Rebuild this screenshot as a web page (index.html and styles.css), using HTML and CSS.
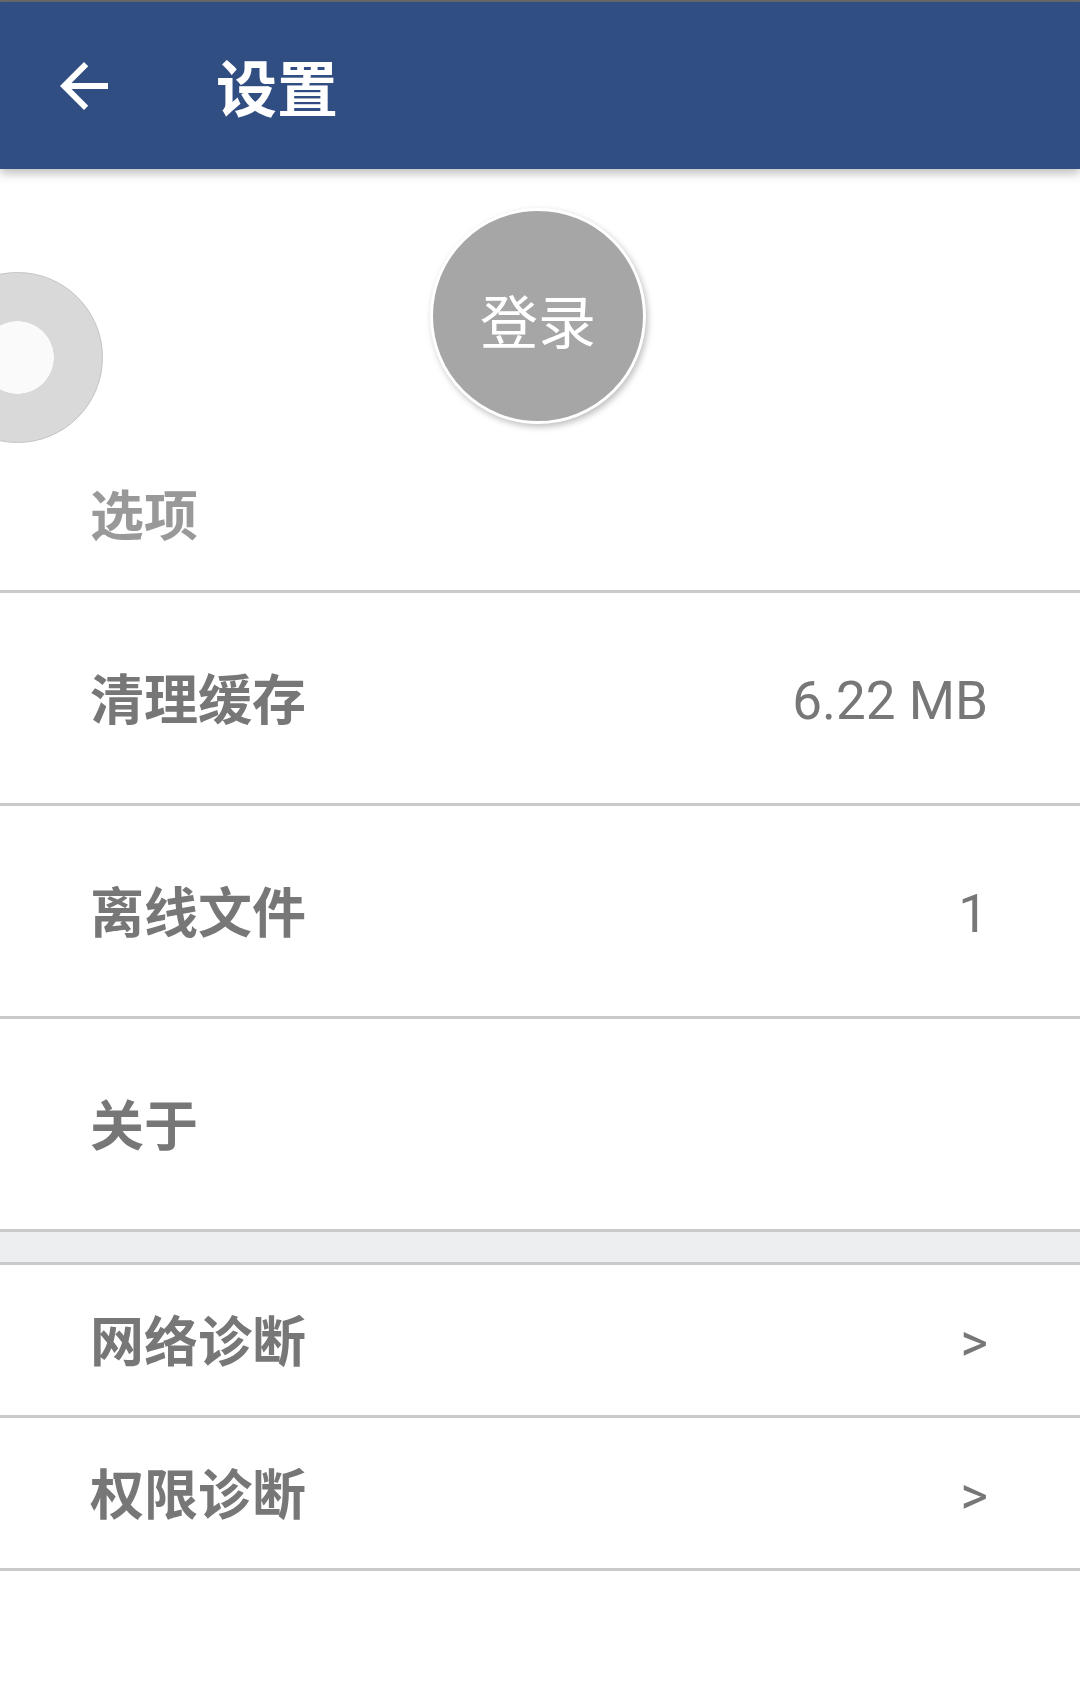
FILE: index.html
```html
<!DOCTYPE html>
<html lang="zh-CN">

<head>
  <meta charset="UTF-8">
  <meta name="viewport" content="width=device-width, initial-scale=1.0">
  <title>设置</title>
  <link rel="stylesheet" href="styles.css">
</head>

<body>
  <div class="status-line"></div>
  <header class="app-bar">
    <button class="back-btn" title="返回">
      <svg viewBox="0 0 24 24" width="72" height="72">
        <path d="M20 11H7.83l5.59-5.59L12 4l-8 8 8 8 1.41-1.41L7.83 13H20v-2z" fill="#ffffff" />
      </svg>
    </button>
    <h1 class="app-title">设置</h1>
  </header>

  <section class="profile">
    <div class="float-dot"></div>
    <div class="login-circle">登录</div>
    <h4 class="section-title">选项</h4>
  </section>

  <ul class="settings-list">
    <li class="item"><span class="label">清理缓存</span><span class="value">6.22 MB</span></li>
    <li class="item"><span class="label">离线文件</span><span class="value">1</span></li>
    <li class="item"><span class="label">关于</span></li>
    <li class="divider-band"></li>
    <li class="item short"><span class="label">网络诊断</span><span class="value">&gt;</span></li>
    <li class="item short"><span class="label">权限诊断</span><span class="value">&gt;</span></li>
  </ul>
</body>

</html>
```

FILE: styles.css
```css
body {
  margin: 0;
  background-color: #ffffff;
  font-family: 'Noto Sans CJK SC', 'Noto Sans', sans-serif;
  overflow: hidden;
}

.status-line {
  height: 2px;
  background-color: #6b6b6b;
}

.app-bar {
  position: relative;
  z-index: 2;
  display: flex;
  align-items: center;
  height: 167px;
  background-color: #314e83;
  box-shadow: 0 4px 10px rgba(0, 0, 0, 0.28);
}

.back-btn {
  display: flex;
  width: 72px;
  height: 72px;
  margin: 0 0 0 48px;
  padding: 0;
  border: none;
  background: transparent;
}

.app-title {
  margin: 0 0 0 96px;
  color: #ffffff;
  font-size: 61px;
  line-height: 61px;
  font-weight: 700;
}

.profile {
  position: relative;
  display: flex;
  flex-direction: column;
  align-items: center;
  height: 421px;
  padding-top: 39px;
  box-sizing: border-box;
}

.float-dot {
  position: absolute;
  left: -68px;
  top: 103px;
  width: 171px;
  height: 171px;
  box-sizing: border-box;
  border-radius: 50%;
  border: 1px solid #c4c4c4;
  background: radial-gradient(circle at center, #fafafa 0 36px, #d9d9d9 36.5px);
}

.login-circle {
  display: flex;
  align-items: center;
  justify-content: center;
  width: 216px;
  height: 216px;
  margin-left: -4px;
  box-sizing: border-box;
  border: 3px solid #ffffff;
  border-radius: 50%;
  background-color: #a6a6a6;
  box-shadow: 2px 3px 6px rgba(0, 0, 0, 0.25);
  color: #ffffff;
  font-size: 58px;
  padding-top: 6px;
}

.section-title {
  align-self: flex-start;
  margin: 61px 0 0 90px;
  color: #999999;
  font-size: 54px;
  line-height: 55px;
  font-weight: 700;
}

.settings-list {
  list-style: none;
  margin: 0;
  padding: 0;
  border-top: 3px solid #cacaca;
}

.item {
  display: flex;
  align-items: center;
  justify-content: space-between;
  height: 210px;
  padding: 0 92px 0 90px;
  border-bottom: 3px solid #cacaca;
}

.item.short {
  height: 150px;
}

.label {
  margin-top: -3px;
  color: #777777;
  font-size: 54px;
  font-weight: 700;
}

.value {
  padding-top: 6px;
  color: #777777;
  font-family: Roboto, sans-serif;
  font-size: 53px;
}

.divider-band {
  height: 30px;
  background-color: #edeef0;
  border-bottom: 3px solid #cacaca;
}
```
